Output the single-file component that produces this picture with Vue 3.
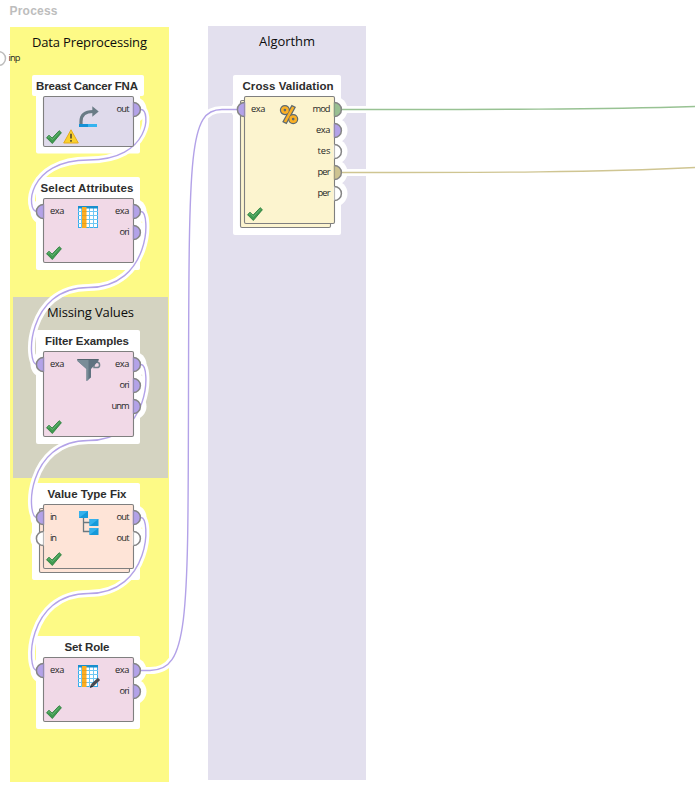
<script setup>
const bands = [
  { x: 10, y: 27, w: 159, h: 755, fill: '#fdfa86', title: 'Data Preprocessing', tx: 89.5, ty: 47, tw: 115 },
  { x: 13, y: 297, w: 155, h: 181, fill: '#d4d3c1', title: 'Missing Values', tx: 90.5, ty: 317, tw: 87 },
  { x: 208, y: 26, w: 158, h: 754, fill: '#e3e0ee', title: 'Algorthm', tx: 287, ty: 46, tw: 56 },
]

const DATA = '#b3a2e8'
const EMPTY = '#ffffff'

const nodes = [
  { name: 'Breast Cancer FNA', tw: 102, x: 43, y: 96, h: 50, fill: '#dfdaeb', icon: 'retrieve', warn: true, wide: true,
    ins: [], outs: [['out', 13, DATA]] },
  { name: 'Select Attributes', tw: 93, x: 43, y: 198, h: 64, fill: '#f1d9e7', icon: 'table',
    ins: [['exa', 14.5, DATA]], outs: [['exa', 14.5, DATA], ['ori', 10, DATA]] },
  { name: 'Filter Examples', tw: 84, x: 43, y: 351, h: 85, fill: '#f1d9e7', icon: 'filter',
    ins: [['exa', 14.5, DATA]], outs: [['exa', 14.5, DATA], ['ori', 10, DATA], ['unm', 18, DATA]] },
  { name: 'Value Type Fix', tw: 79, x: 43, y: 504, h: 64, fill: '#fee4d7', icon: 'tree', stacked: true,
    ins: [['in', 7, DATA], ['in', 7, EMPTY]], outs: [['out', 13, DATA], ['out', 13, EMPTY]] },
  { name: 'Set Role', tw: 45, x: 43, y: 657, h: 64, fill: '#f1d9e7', icon: 'role',
    ins: [['exa', 14.5, DATA]], outs: [['exa', 14.5, DATA], ['ori', 10, DATA]] },
  { name: 'Cross Validation', tw: 91, x: 244, y: 96, h: 127, fill: '#fcf4cf', icon: 'percent', stacked: true,
    ins: [['exa', 14.5, DATA]],
    outs: [['mod', 18, '#98bf91'], ['exa', 14.5, DATA], ['tes', 13, EMPTY], ['per', 13, '#cdc391'], ['per', 13, EMPTY]] },
]

const portY = (i) => 13.5 + i * 21

function backLink(y1, y2) {
  const m = (y1 + y2) / 2 - 0.5
  return `M141 ${y1}C151 ${y1} 151 ${m} 88.5 ${m}C26 ${m} 26 ${y2} 37 ${y2}`
}

const wires = [
  { d: backLink(109.5, 211.5), c: DATA },
  { d: backLink(211.5, 364.5), c: DATA },
  { d: backLink(364.5, 517.5), c: DATA },
  { d: backLink(517.5, 670.5), c: DATA },
  { d: 'M141 670.5H150C189 670.5 188 620 188.5 390C189 150 189 109.5 222 109.5H238', c: DATA },
  { d: 'M341 109.5C490 109.5 600 109.5 700 106.3', c: '#98c293' },
  { d: 'M341 172.5C490 172.5 600 172.5 700 167.3', c: '#cfc592' },
]
</script>

<template>
  <svg class="canvas" width="695" height="792" viewBox="0 0 695 792">
    <text class="crumb" x="9.5" y="15" textLength="48">Process</text>

    <g v-for="b in bands" :key="b.title">
      <rect :x="b.x" :y="b.y" :width="b.w" :height="b.h" :fill="b.fill" />
      <text class="band" :x="b.tx" :y="b.ty" :textLength="b.tw">{{ b.title }}</text>
    </g>

    <circle cx="-1.5" cy="58.5" r="7" fill="#fff" stroke="#bdbdbd" stroke-width="1.5" />
    <text class="port" x="8.5" y="61" textLength="12">inp</text>

    <g fill="#fff">
      <g v-for="n in nodes" :key="n.name">
        <rect :x="n.x - (n.wide || n.stacked ? 11 : 7)" :y="n.y - 21" :width="n.wide ? 112 : n.stacked ? 108 : 104" height="21" rx="2" />
        <rect :x="n.x - (n.stacked ? 11 : 7)" :y="n.y - (n.wide ? 4 : 20)" :width="n.stacked ? 108 : 104"
          :height="n.h + (n.wide ? 11.5 : n.stacked ? 32 : 28)" rx="2" />
        <circle v-for="(p, i) in n.ins" :key="'i' + i" :cx="n.x + 0.5" :cy="n.y + portY(i)" r="13" />
        <circle v-for="(p, i) in n.outs" :key="'o' + i" :cx="n.x + 90.5" :cy="n.y + portY(i)" r="13" />
      </g>
    </g>
    <path v-for="(w, i) in wires" :key="'h' + i" :d="w.d" class="halo" />
    <path v-for="(w, i) in wires" :key="'w' + i" :d="w.d" class="wire" :stroke="w.c" />

    <g v-for="n in nodes" :key="n.name" :transform="`translate(${n.x} ${n.y})`">
      <text class="title" x="44" y="-6" :textLength="n.tw">{{ n.name }}</text>
      <rect v-if="n.stacked" x="-3.5" y="4.5" width="90" :height="n.h" rx="1.5" :fill="n.fill" class="box" />
      <circle v-for="(p, i) in n.ins" :key="'i' + i" cx="0.5" :cy="portY(i)" r="7.1" :fill="p[2]" class="dot" />
      <circle v-for="(p, i) in n.outs" :key="'o' + i" cx="90.3" :cy="portY(i)" r="7.1" :fill="p[2]" class="dot" />
      <rect x="0.5" y="0.5" width="90" :height="n.h" rx="1.5" :fill="n.fill" class="box" />
      <g v-for="(p, i) in n.ins" :key="'it' + i">
        <rect x="0" :y="portY(i) - 7" width="1.8" height="14" :fill="p[2]" opacity=".45" />
        <text class="port" x="7" :y="portY(i) + 2.5" :textLength="p[1]">{{ p[0] }}</text>
      </g>
      <g v-for="(p, i) in n.outs" :key="'ot' + i">
        <rect x="89.2" :y="portY(i) - 7" width="1.8" height="14" :fill="p[2]" opacity=".45" />
        <text class="port end" x="86.5" :y="portY(i) + 2.5" :textLength="p[1]">{{ p[0] }}</text>
      </g>

      <g :transform="`translate(3 ${n.h - 16.5})`">
        <path d="M.5 8.2 3 5.8 6.1 8.6 13.2 1.2 15.4 3.2 6.3 14Z" fill="#3f9a50" stroke="#2f8040" stroke-width=".9" />
        <path d="M2 8 3.2 7 6.4 10 13.2 2.8" fill="none" stroke="#6dbb7c" stroke-width=".9" />
      </g>
      <g v-if="n.warn" transform="translate(20 33)">
        <path d="M8 .8 15.3 14H.7Z" fill="#fbd22c" stroke="#e3ab20" stroke-width="1" stroke-linejoin="round" />
        <path d="M8 4.8V9.6M8 11V12.7" stroke="#50482c" stroke-width="1.6" />
      </g>

      <g v-if="n.icon === 'retrieve'">
        <path d="M38 28V25.5C38 18.5 42.5 15.5 50 15.5" fill="none" stroke="#697b85" stroke-width="3.2" />
        <path d="M49.3 10.3 55.7 15.5 49.3 20.8Z" fill="#697b85" />
        <rect x="36" y="28" width="9" height="3" fill="#1491d6" />
        <rect x="45" y="28" width="9" height="3" fill="#35b3ef" />
      </g>
      <g v-if="n.icon === 'table' || n.icon === 'role'" transform="translate(35 8)">
        <rect x=".5" y=".5" width="19" height="21" fill="#fff" stroke="#38aceb" />
        <path d="M3.5 2V22M11.5 2V22M15.5 2V22M0 5.5H20M0 9.5H20M0 13.5H20M0 17.5H20" stroke="#6dc6f3" stroke-width="1" />
        <rect width="20" height="2.5" fill="#188fcd" />
        <rect x="4" y="1" width="4.5" height="21" fill="#fbae23" />
        <path d="M4 5.5H8.5M4 9.5H8.5M4 13.5H8.5M4 17.5H8.5" stroke="#e89b17" stroke-width=".8" />
        <g v-if="n.icon === 'role'">
          <path d="M14 20.5 21 13.8" stroke="#494a50" stroke-width="3.2" />
          <path d="M11.8 23 12.9 19.4 15.3 21.8Z" fill="#292b30" />
        </g>
      </g>
      <g v-if="n.icon === 'filter'" transform="translate(34.5 7)">
        <path d="M17 4.2H19.4A2.7 2.7 0 0 1 19.4 9.6H16.5V6.5" fill="none" stroke="#71828c" stroke-width="1.5" />
        <path d="M0 1H21V3L13.5 11V19.5L9 23V11L0 3Z" fill="#5f7380" />
        <path d="M0 1H11V22L9 23V11L0 3Z" fill="#7a8d98" />
        <path d="M0 1.5H21" stroke="#53656f" />
      </g>
      <g v-if="n.icon === 'tree'" transform="translate(36 7)">
        <path d="M4.5 6V20.5H11M4.5 11.5H11" fill="none" stroke="#6b7880" stroke-width="1.3" />
        <g v-for="(s, i) in [[0, 0], [10.5, 8], [10.5, 17]]" :key="i" :transform="`translate(${s[0]} ${s[1]})`">
          <rect width="9" height="7" fill="#169ada" />
          <path d="M0 0H9L0 7Z" fill="#35b1ec" />
        </g>
      </g>
      <g v-if="n.icon === 'percent'" transform="translate(36 8.5)" fill="none">
        <g stroke="#5d6a70" stroke-width="5">
          <circle cx="4.9" cy="5.6" r="2.6" /><circle cx="13.2" cy="14.6" r="2.6" /><path d="M13.8 1.4 4.4 18.6" />
        </g>
        <g stroke="#fbb024" stroke-width="2.6">
          <circle cx="4.9" cy="5.6" r="2.6" /><circle cx="13.2" cy="14.6" r="2.6" /><path d="M13.2 2.5 5 17.5" />
        </g>
      </g>
    </g>
  </svg>
</template>

<style>
body { background: #fff; }
</style>

<style scoped>
.canvas { display: block; overflow: hidden; }
.crumb { font: bold 12px "Liberation Sans", sans-serif; fill: #bdbdbd; }
.band { font: 13px "Open Sans", sans-serif; fill: #0c0c0c; text-anchor: middle; }
.title { font: bold 11.5px "Liberation Sans", sans-serif; fill: #2d2d2d; text-anchor: middle; }
.port { font: 9.3px "Open Sans", sans-serif; fill: #262626; }
.end { text-anchor: end; }
.halo { fill: none; stroke: #fff; stroke-width: 7; }
.wire { fill: none; stroke-width: 1.4; }
.box { stroke: #7f7f7f; stroke-width: 1.1; }
.dot { stroke: #858585; stroke-width: 1.5; }
</style>
